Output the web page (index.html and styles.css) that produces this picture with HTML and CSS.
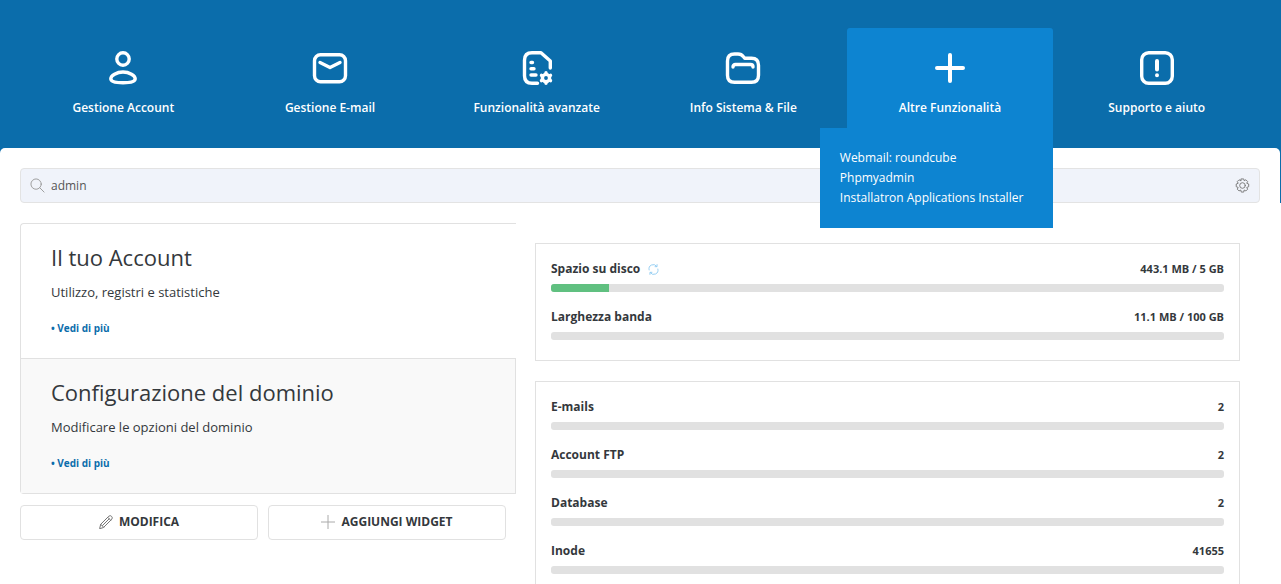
FILE: index.html
```html
<!DOCTYPE html>
<html lang="it">
<head>
  <meta charset="UTF-8">
  <meta name="viewport" content="width=device-width, initial-scale=1.0">
  <title>Pannello di controllo</title>
  <link rel="stylesheet" href="styles.css">
</head>
<body>

  <header class="header">
    <nav class="nav">
      <a class="nav-item" href="#">
        <svg class="nav-icon" viewBox="0 0 36 36">
          <circle cx="18" cy="9" r="6.200"/>
          <path d="M18 22c6.300 0 12.200 3.700 12.200 6.800 0 2.900-5.400 4-12.200 4s-12.200-1.100-12.200-4c0-3.100 5.900-6.800 12.200-6.800z"/>
        </svg>
        <span>Gestione Account</span>
      </a>
      <a class="nav-item" href="#">
        <svg class="nav-icon" viewBox="0 0 36 36">
          <rect x="2.500" y="4.700" width="31" height="27" rx="6"/>
          <path d="M8 12.500l10 5 10-5"/>
        </svg>
        <span>Gestione E-mail</span>
      </a>
      <a class="nav-item" href="#">
        <svg class="nav-icon" viewBox="0 0 36 36">
          <path d="M18.500 33.300h-5.500q-7.500 0-7.500-7.500v-15.600q0-7.500 7.500-7.500h9l9.300 8.300v7"/>
          <path d="M12 12.500h1.500M12 18.700h3M12 25h5"/>
          <circle cx="27" cy="28" r="3.600"/>
          <path d="M27 22.800v1M27 32.200v1M22.500 25.400l.9.500M30.600 30.100l.9.500M22.500 30.600l.9-.5M30.600 25.900l.9-.5"/>
        </svg>
        <span>Funzionalità avanzate</span>
      </a>
      <a class="nav-item" href="#">
        <svg class="nav-icon" viewBox="0 0 36 36">
          <path d="M2.500 11q0-7 7-7h3.500c3 0 4 .8 5.500 2.800l1.200 1.500h6.800q7 0 7 7v10q0 7-7 7H9.500q-7 0-7-7z"/>
          <path d="M8 17q0-2.500 2.500-2.500h15q2.500 0 2.500 2.500"/>
        </svg>
        <span>Info Sistema &amp; File</span>
      </a>
      <div class="nav-group">
        <a class="nav-item active" href="#">
          <svg class="nav-icon" viewBox="0 0 36 36">
            <path class="thick" d="M18 5v26M5 18h26"/>
          </svg>
          <span>Altre Funzionalità</span>
        </a>
        <div class="submenu">
          <a href="#">Webmail: roundcube</a>
          <a href="#">Phpmyadmin</a>
          <a href="#">Installatron Applications Installer</a>
        </div>
      </div>
      <a class="nav-item" href="#">
        <svg class="nav-icon" viewBox="0 0 36 36">
          <rect x="2.700" y="2.700" width="30.600" height="30.600" rx="7"/>
          <path class="thick" d="M18 11v8.500M18 25.200v.1"/>
        </svg>
        <span>Supporto e aiuto</span>
      </a>
    </nav>
  </header>

  <main class="panel">
    <form class="search">
      <svg class="search-icon" viewBox="0 0 16 16">
        <circle cx="6.500" cy="6.500" r="5.500"/>
        <path d="M10.500 10.500l4.500 4.500"/>
      </svg>
      <input type="text" value="admin" aria-label="Cerca">
      <button class="settings" type="button" aria-label="Impostazioni">
        <svg viewBox="0 0 16 16">
          <circle cx="8" cy="8" r="3"/>
          <path d="M6.700 1h2.600l.5 1.900 1.800-1 1.900 1.900-1 1.800 2.100.8v2.900l-2.100.8 1 1.800-1.900 1.900-1.800-1-.5 2.200H6.700l-.6-2.200-1.800 1-1.900-1.900 1-1.800-2.100-.8V6.400l2.100-.8-1-1.800 1.900-1.900 1.800 1z"/>
        </svg>
      </button>
    </form>

    <div class="columns">
      <div class="left">
        <div class="tabs">
          <section class="tab">
            <h2>Il tuo Account</h2>
            <p>Utilizzo, registri e statistiche</p>
            <a href="#">• Vedi di più</a>
          </section>
          <section class="tab tab-grey">
            <h2>Configurazione del dominio</h2>
            <p>Modificare le opzioni del dominio</p>
            <a href="#">• Vedi di più</a>
          </section>
        </div>
        <div class="actions">
          <button type="button">
            <svg viewBox="0 0 14 14">
              <path d="M.7 13.300l1-4L9.800 1.200q1.500-1.200 2.800.200t.200 2.800l-8.100 8.100zM1.700 9.300l3 3M8.700 2.300l3 3M3.500 10.500l6.700-6.700"/>
            </svg>
            MODIFICA
          </button>
          <button type="button">
            <svg class="plus" viewBox="0 0 14 14">
              <path d="M7 0v14M0 7h14"/>
            </svg>
            AGGIUNGI WIDGET
          </button>
        </div>
      </div>

      <div class="right">
        <section class="usage">
          <div class="row">
            <div class="row-head">
              <span>Spazio su disco
                <button class="refresh" type="button" aria-label="Aggiorna">
                  <svg viewBox="0 0 12 12">
                    <path d="M1.200 6.500A4.700 4.700 0 0 1 9.500 2.500M10.800 5.500A4.700 4.700 0 0 1 2.500 9.500M9.900.700v2.200H7.700M2.100 11.300V9.100h2.200"/>
                  </svg>
                </button>
              </span>
              <span class="value">443.1 MB / 5 GB</span>
            </div>
            <div class="bar"><div class="fill" style="width: 8.65%"></div></div>
          </div>
          <div class="row">
            <div class="row-head"><span>Larghezza banda</span><span class="value">11.1 MB / 100 GB</span></div>
            <div class="bar"></div>
          </div>
        </section>

        <section class="usage">
          <div class="row">
            <div class="row-head"><span>E-mails</span><span class="value">2</span></div>
            <div class="bar"></div>
          </div>
          <div class="row">
            <div class="row-head"><span>Account FTP</span><span class="value">2</span></div>
            <div class="bar"></div>
          </div>
          <div class="row">
            <div class="row-head"><span>Database</span><span class="value">2</span></div>
            <div class="bar"></div>
          </div>
          <div class="row">
            <div class="row-head"><span>Inode</span><span class="value">41655</span></div>
            <div class="bar"></div>
          </div>
        </section>
      </div>
    </div>
  </main>

</body>
</html>
```
FILE: styles.css
```css
* {
  box-sizing: border-box;
}

html {
  scrollbar-width: none;
}

body {
  font-family: "Open Sans", "Noto Sans", sans-serif;
  font-size: 13px;
  line-height: 20px;
  color: #34383c;
  background: #fff;
  margin: 0;
}

a {
  text-decoration: none;
}

svg {
  fill: none;
  stroke-linecap: round;
  stroke-linejoin: round;
}

/* Menu principale */
.header {
  background: #0b6dab;
  padding: 28px 21px 75px 20px;
}

.nav {
  display: grid;
  grid-template-columns: repeat(6, 1fr);
}

.nav-item {
  display: flex;
  flex-direction: column;
  align-items: center;
  gap: 12px;
  height: 100px;
  padding-top: 22px;
  border-radius: 3px 3px 0 0;
  color: #fff;
  font-size: 12px;
  font-weight: 600;
}

.nav-item.active {
  background: #0d84d1;
}

.nav-icon {
  width: 36px;
  height: 36px;
  stroke: #fff;
  stroke-width: 3.4;
}

.nav-icon .thick {
  stroke-width: 4;
}

.nav-group {
  position: relative;
}

.submenu {
  position: absolute;
  top: 100%;
  right: 0;
  z-index: 10;
  display: flex;
  flex-direction: column;
  padding: 20px 30px 20px 20px;
  background: #0d84d1;
  font-size: 12px;
  white-space: nowrap;
}

.submenu a {
  color: #fff;
}

/* Contenuto */
.panel {
  margin: -55px 1px 0 0;
  padding: 20px;
  background: #fff;
  border-radius: 5px 5px 0 0;
}

.search {
  display: flex;
  align-items: center;
  height: 35px;
  padding: 0 9px;
  background: #f0f3fa;
  border: 1px solid #e3e3e3;
  border-radius: 4px;
}

.search-icon {
  width: 15px;
  height: 15px;
  stroke: #999;
}

.search input {
  flex: 1;
  min-width: 0;
  padding: 0 6px;
  border: 0;
  outline: 0;
  background: none;
  color: #555;
  font: inherit;
  font-size: 12px;
}

.settings,
.refresh {
  padding: 0;
  border: 0;
  background: none;
}

.settings svg {
  display: block;
  width: 15px;
  height: 15px;
  stroke: #777;
}

.columns {
  display: grid;
  grid-template-columns: 2fr 3fr;
  margin-top: 20px;
}

.tabs {
  border: 1px solid #e1e1e1;
  border-right: 0;
  border-radius: 4px 0 0 4px;
}

.tab {
  padding: 20px 30px;
}

.tab-grey {
  background: #f9f9f9;
  border-top: 1px solid #e1e1e1;
  border-right: 1px solid #e1e1e1;
}

.tab h2 {
  margin: 0;
  font-size: 22px;
  font-weight: 400;
  line-height: 26px;
}

.tab p {
  margin: 12px 0 16px;
}

.tab a {
  display: block;
  color: #0b6dab;
  font-size: 10px;
  font-weight: 700;
}

.actions {
  display: grid;
  grid-template-columns: 1fr 1fr;
  gap: 10px;
  padding: 11px 10px 0 0;
}

.actions button {
  display: flex;
  align-items: center;
  justify-content: center;
  gap: 6px;
  height: 35px;
  padding: 0 0 2px;
  background: #fff;
  border: 1px solid #e1e1e1;
  border-radius: 4px;
  color: #34383c;
  font: inherit;
  font-size: 12px;
  font-weight: 700;
}

.actions svg {
  width: 14px;
  height: 14px;
  stroke: #777;
}

.actions .plus {
  stroke: #aaa;
}

/* Statistiche di utilizzo */
.right {
  display: flex;
  flex-direction: column;
  gap: 20px;
  padding: 20px 20px 0 19px;
}

.usage {
  display: flex;
  flex-direction: column;
  gap: 15px;
  padding: 15px 15px 20px;
  border: 1px solid #e1e1e1;
}

.row-head {
  display: flex;
  justify-content: space-between;
  margin-bottom: 5px;
  font-size: 12px;
  font-weight: 700;
}

.row-head .value {
  font-size: 11px;
}

.refresh {
  margin-left: 5px;
  vertical-align: middle;
}

.refresh svg {
  display: block;
  width: 11px;
  height: 11px;
  stroke: #8fccf2;
}

.bar {
  height: 8px;
  background: #e1e1e1;
  border-radius: 3px;
  overflow: hidden;
}

.fill {
  height: 100%;
  background: #60c080;
}
```
